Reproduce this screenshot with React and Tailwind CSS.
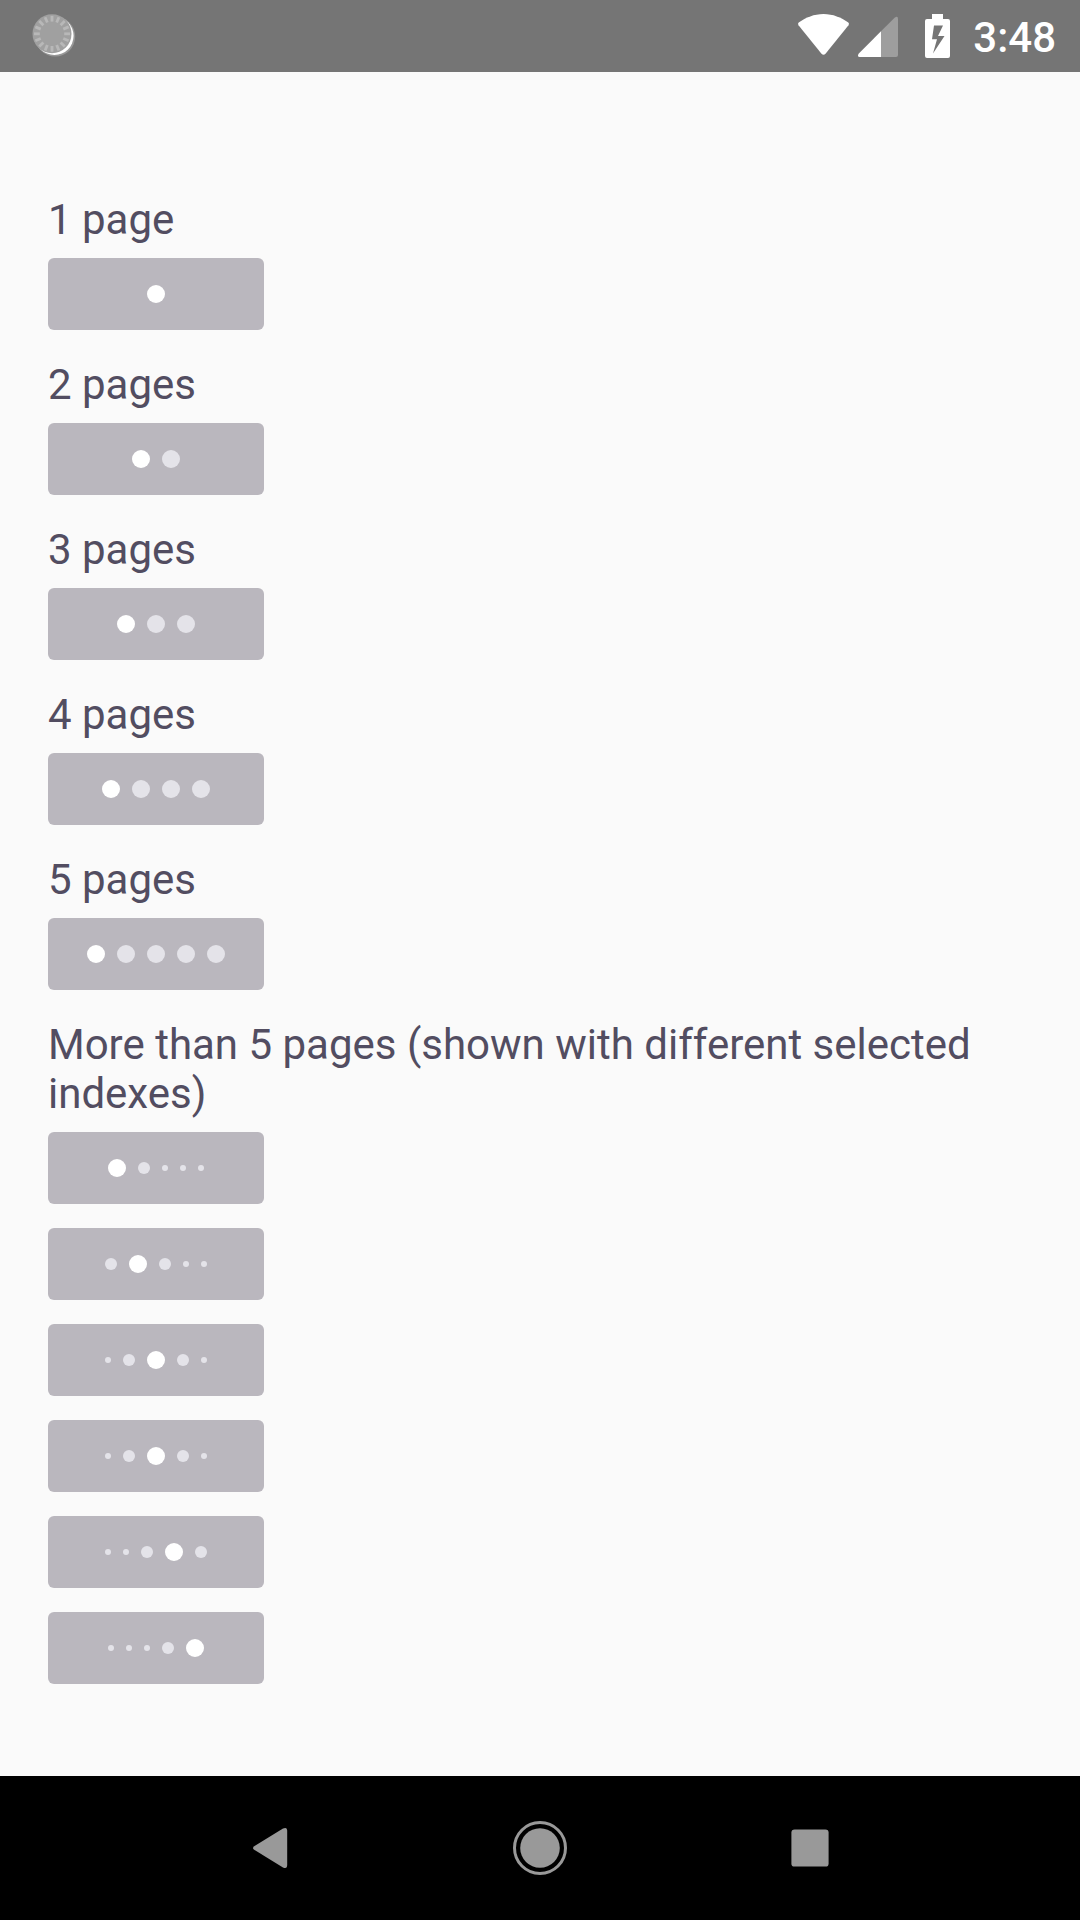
const pageCounts = [1, 2, 3, 4, 5];

const windows = [
  ["L", "m", "s", "s", "s"],
  ["m", "L", "m", "s", "s"],
  ["s", "m", "L", "m", "s"],
  ["s", "m", "L", "m", "s"],
  ["s", "s", "m", "L", "m"],
  ["s", "s", "s", "m", "L"],
];

const dotStyles = {
  L: "size-[18px] bg-white",
  l: "size-[18px] bg-[#e4e3e9]",
  m: "size-3 bg-[#e4e3e9]",
  s: "size-1.5 bg-[#e4e3e9]",
};

function Indicator({ dots }) {
  return (
    <div className="flex h-[72px] w-[216px] items-center justify-center gap-3 rounded-md bg-[#bab7be]">
      {dots.map((dot, i) => (
        <span key={i} className={`shrink-0 rounded-full ${dotStyles[dot]}`} />
      ))}
    </div>
  );
}

function Section({ title, children }) {
  return (
    <section className="flex flex-col gap-3.5">
      <h2 className="text-[42px] leading-[49px] text-[#524d61]">{title}</h2>
      <div className="flex flex-col gap-6">{children}</div>
    </section>
  );
}

function SyncIcon() {
  const ticks = Array.from({ length: 16 }, (_, i) => i * 22.5);
  return (
    <svg className="ml-7 size-12" viewBox="28 12 48 48">
      <circle cx="55.2" cy="36.6" r="20" fill="#fff" opacity="0.25" />
      <circle cx="54.4" cy="35.8" r="19.2" fill="#fff" />
      <circle cx="52" cy="33.8" r="19.5" fill="#a0a0a0" />
      {ticks.map((angle) => (
        <path
          key={angle}
          d="M52 15.8v5.8"
          stroke="#b8b8b8"
          strokeWidth="2.8"
          transform={`rotate(${angle} 52 33.8)`}
        />
      ))}
    </svg>
  );
}

function StatusBar() {
  return (
    <header className="flex h-[72px] items-center justify-between bg-[#757575] text-white">
      <SyncIcon />
      <div className="flex items-center pr-6">
        <svg className="h-[72px] w-[160px]" viewBox="796 0 160 72">
          <path
            d="M798.7 22.5C806 17.5 814 14 823.5 14S841 17.5 848.3 22.5Q849.6 23.8 848.5 25.3L825.5 53.7Q823.5 56 821.5 53.7L798.5 25.3Q797.4 23.8 798.7 22.5Z"
            fill="#fff"
          />
          <path d="M881 31.3L894.6 17.7Q898 15.5 898 19V55Q898 57 896 57H881Z" fill="#9e9e9e" />
          <path d="M881 31.3V57H859.5Q857 56.5 858.6 53.7Z" fill="#fff" />
          <path
            fillRule="evenodd"
            d="M932 14H943V19H948Q950 19 950 21V56Q950 58 948 58H927Q925 58 925 56V21Q925 19 927 19H932ZM934 25.5L932 39.3H937L933 53.5L944.5 36H938L943 25.5Z"
            fill="#fff"
          />
        </svg>
        <span className="ml-4 w-[84px] pt-0.5 text-right text-[42px] leading-[49px] font-medium">3:48</span>
      </div>
    </header>
  );
}

function NavBar() {
  return (
    <nav className="flex h-36 items-center justify-center gap-[216px] bg-black">
      <svg className="size-[54px]" viewBox="0 0 54 54" fill="#999">
        <path d="M11.2 25.2L40 7.6Q44.2 5.8 44.2 10V44Q44.2 48.2 40 46.4L11.2 28.8Q8.8 27 11.2 25.2Z" />
      </svg>
      <svg className="size-[54px]" viewBox="0 0 54 54">
        <circle cx="27" cy="27" r="25.5" fill="none" stroke="#999" strokeWidth="3" />
        <circle cx="27" cy="27" r="19.8" fill="#999" />
      </svg>
      <svg className="size-[54px]" viewBox="0 0 54 54">
        <rect x="8.4" y="8.4" width="37.2" height="37.2" rx="3.2" fill="#999" />
      </svg>
    </nav>
  );
}

export default function App() {
  return (
    <div className="flex h-[1920px] w-[1080px] flex-col overflow-hidden bg-[#fafafa] font-['Roboto',sans-serif]">
      <StatusBar />
      <main className="flex flex-1 flex-col gap-[30px] px-12 pt-[123px]">
        {pageCounts.map((count) => (
          <Section key={count} title={count === 1 ? "1 page" : `${count} pages`}>
            <Indicator dots={Array.from({ length: count }, (_, i) => (i === 0 ? "L" : "l"))} />
          </Section>
        ))}
        <Section title="More than 5 pages (shown with different selected indexes)">
          {windows.map((dots, i) => (
            <Indicator key={i} dots={dots} />
          ))}
        </Section>
      </main>
      <NavBar />
    </div>
  );
}
